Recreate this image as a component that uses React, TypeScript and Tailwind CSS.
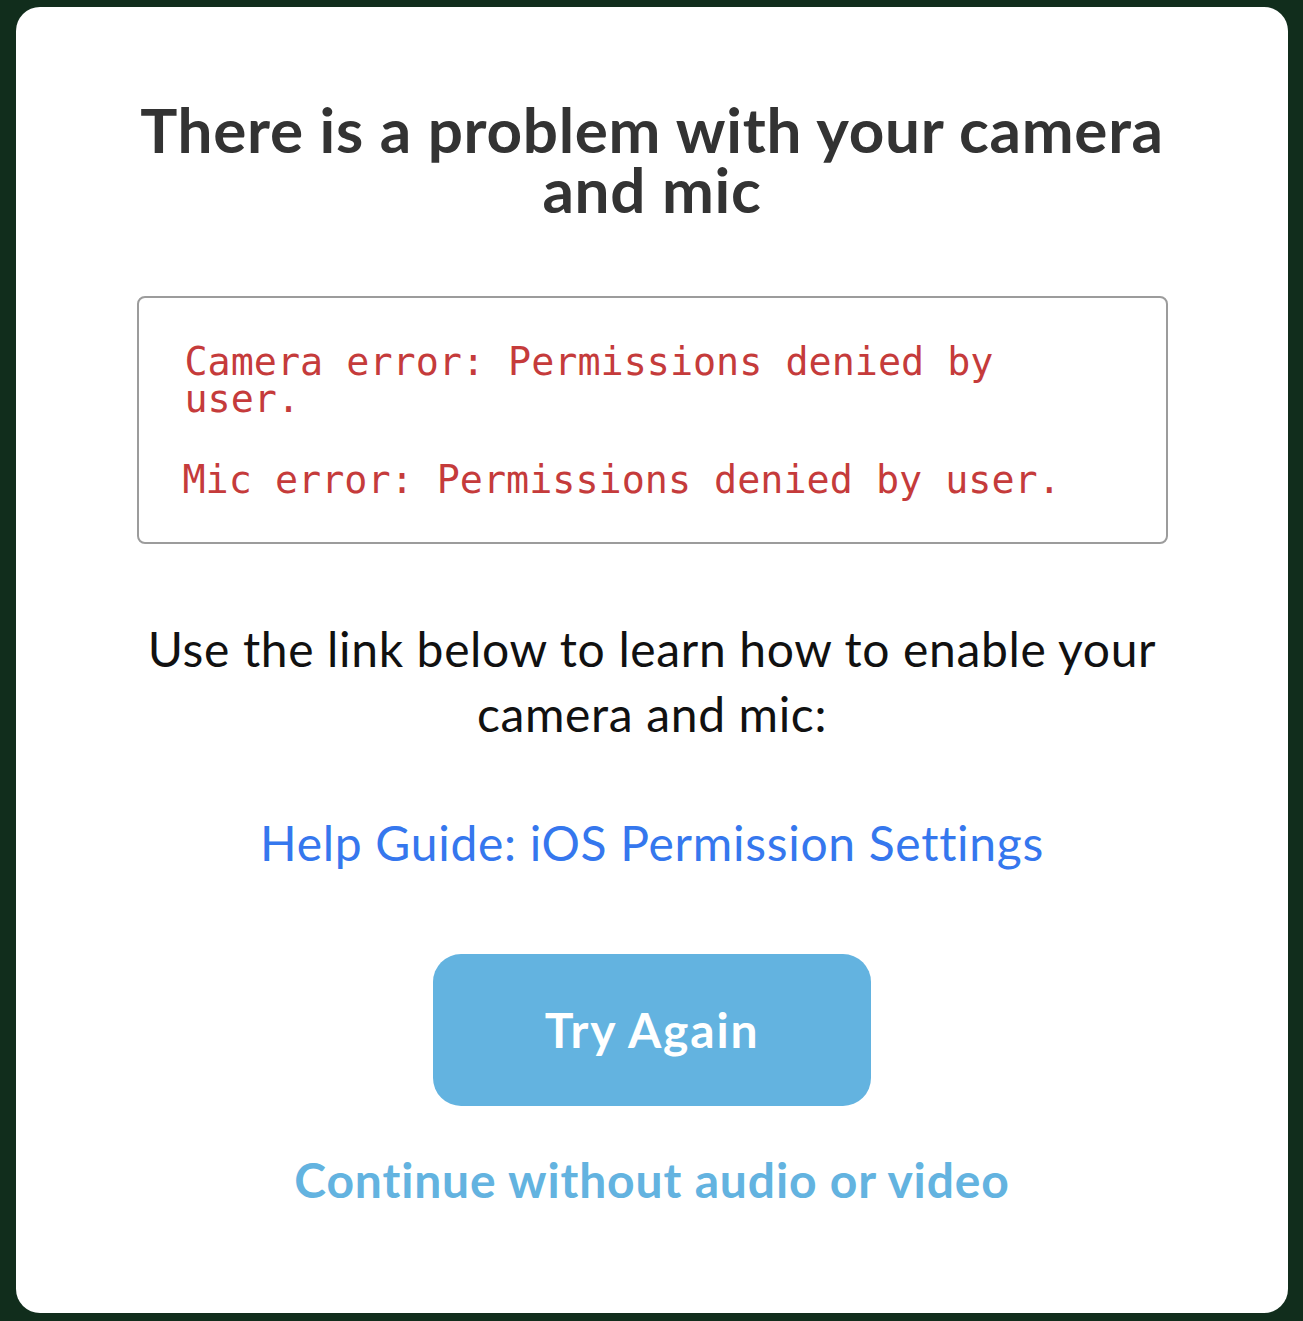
const font = { fontFamily: "Lato, 'Noto Sans', sans-serif" };

const App = () => {
  return (
    <div className="h-[1321px] w-full bg-[#112d1c] pt-[7px] px-[16px]">
      <div
        className="h-[1306px] w-[1272px] rounded-[24px] bg-white flex flex-col items-center px-[120px] pt-[92px]"
        style={font}
      >
        {/* Title */}
        <h1 className="text-[62px] leading-[60px] tracking-[0.7px] font-bold text-[#333] text-center">
          There is a problem with your camera and mic
        </h1>

        {/* Error box */}
        <div className="mt-[77px] w-[1031px] h-[248px] shrink-0 rounded-[8px] border-2 border-[#9c9c9c] pl-[44px] pr-[40px] pt-[45px] font-['DejaVu_Sans_Mono',monospace] text-[38.4px] text-[#c53b3b]">
          <p className="leading-[37px] pl-[2px]">Camera error: Permissions denied by user.</p>
          <p className="leading-[37px] mt-[44px]">Mic error: Permissions denied by user.</p>
        </div>

        {/* Help text */}
        <p className="mt-[72px] text-[48px] leading-[65px] tracking-[0.64px] text-[#111] text-center">
          Use the link below to learn how to enable your camera and mic:
        </p>

        <a className="mt-[67px] text-[48px] leading-[60px] tracking-[0.7px] text-[#3577ee]">
          Help Guide: iOS Permission Settings
        </a>

        {/* Actions */}
        <button className="mt-[81px] w-[438px] h-[152px] shrink-0 rounded-[28px] bg-[#63b3e0] text-white text-[48px] tracking-[1.8px] font-bold">
          Try Again
        </button>
        <a className="mt-[44px] text-[48px] leading-[60px] tracking-[0.85px] font-bold text-[#63b3e0]">
          Continue without audio or video
        </a>
      </div>
    </div>
  );
};

export default App;
